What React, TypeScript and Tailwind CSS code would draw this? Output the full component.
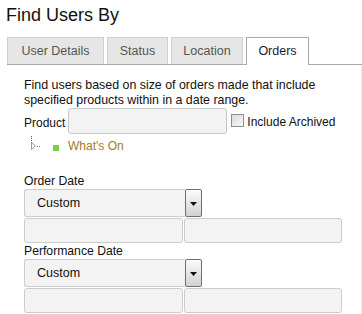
import React from 'react';

const tabs = [
  { label: 'User Details', width: 'w-[97px]' },
  { label: 'Status', width: 'w-[61px]' },
  { label: 'Location', width: 'w-[72px]' },
  { label: 'Orders', width: 'w-[63px]', active: true },
];

const TreeIcon = () => (
  <svg width="12" height="15" viewBox="0 0 12 15" className="mt-[1px] ml-[6px] shrink-0">
    {[0, 2, 4, 6, 8].map((y) => (
      <rect key={y} x="1" y={y} width="1" height="1" fill="#555" />
    ))}
    <path d="M1.5 6.5 L5.5 10 L1.5 13.5 Z" fill="none" stroke="#9a9a9a" strokeWidth="1" />
    <rect x="7" y="10" width="1" height="1" fill="#777" />
    <rect x="9" y="10" width="1" height="1" fill="#777" />
  </svg>
);

const DateSelect = ({ label }: { label: string }) => (
  <div>
    <div className="leading-[15px] text-[12.2px] text-[#111]">{label}</div>
    <div className="flex h-[28px] w-[178px]">
      <div className="flex items-center w-[161px] h-full border border-r-0 border-[#cccccc] bg-[#f3f3f3] rounded-l-[3px] pl-[12px] text-[12.5px] text-[#111]">
        Custom
      </div>
      <div className="flex items-center justify-center w-[17px] h-full border border-[#6e6e6e] rounded-[2px] bg-gradient-to-b from-[#fbfbfb] to-[#d2d2d2]">
        <svg width="7" height="4" viewBox="0 0 7 4" className="mt-[1px]">
          <path d="M0 0 H7 L3.5 4 Z" fill="#111" />
        </svg>
      </div>
    </div>
    <div className="flex gap-[1px] mt-[1px]">
      <div className="w-[159px] h-[25px] border border-[#cccccc] bg-[#f3f3f3] rounded-[3px]" />
      <div className="w-[158px] h-[25px] border border-[#cccccc] bg-[#f3f3f3] rounded-[3px]" />
    </div>
  </div>
);

export default function App() {
  return (
    <div className="w-[362px] h-[314px] overflow-hidden bg-white pl-[7px] font-['Liberation_Sans',Arial,sans-serif]">
      <h1 className="pt-[4px] -ml-px text-[18px] leading-[22px] text-[#111]">Find Users By</h1>

      {/* Tabs */}
      <div className="mt-[11px] flex items-end gap-[3px] w-[355px] border-b border-[#a9a9a9]">
        {tabs.map((t) =>
          t.active ? (
            <div
              key={t.label}
              className={`${t.width} h-[28px] -mb-px flex items-center justify-center border border-b-0 border-[#a9a9a9] bg-white text-[12.5px] text-[#1c1c2c]`}
            >
              {t.label}
            </div>
          ) : (
            <div
              key={t.label}
              className={`${t.width} h-[27px] flex items-center justify-center border border-b-0 border-[#cfcfcf] bg-[#e6e6e6] text-[12.5px] text-[#555]`}
            >
              {t.label}
            </div>
          )
        )}
      </div>

      {/* Panel */}
      <div className="w-[355px] h-[260px] border-r border-[#ececec] pl-[17px] pt-[13px]">
        <p className="text-[12.4px] leading-[15px] text-[#111] w-[320px]">
          Find users based on size of orders made that include specified products within in a date range.
        </p>

        <div className="flex items-start text-[12px] text-[#111]">
          <span className="mt-[8px] leading-[15px]">Product</span>
          <div className="ml-[3px] w-[159px] h-[26px] border border-[#c8c8c8] bg-[#f3f3f3] rounded-[3px]" />
          <span className="ml-[4px] mt-[6px] w-[13px] h-[13px] border border-[#8e8e8e] bg-gradient-to-br from-[#dcdcdc] to-[#f6f6f6]" />
          <span className="ml-[3px] mt-[7px] leading-[15px]">Include Archived</span>
        </div>

        <div className="flex items-start mt-[1px] h-[19px]">
          <TreeIcon />
          <span className="ml-[11px] mt-[10px] w-[6px] h-[6px] bg-[#7ccf4c]" />
          <span className="ml-[9px] mt-[4px] text-[12px] leading-[15px] text-[#a27a2c]">What's On</span>
        </div>

        <div className="mt-[20px] flex flex-col gap-[1px]">
          <DateSelect label="Order Date" />
          <DateSelect label="Performance Date" />
        </div>
      </div>
    </div>
  );
}
